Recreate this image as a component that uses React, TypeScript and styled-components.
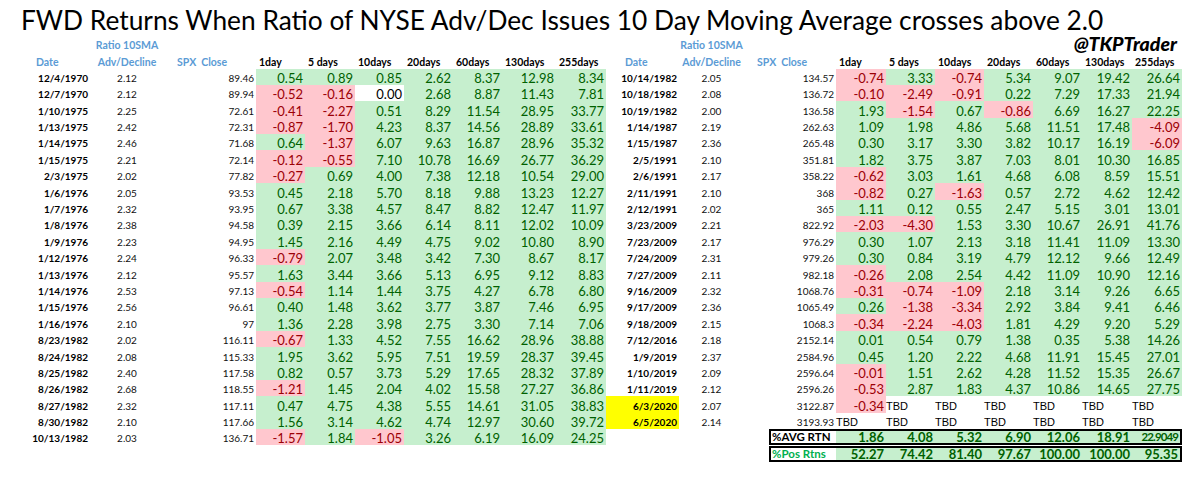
import React from 'react';
import styled, { createGlobalStyle } from 'styled-components';

const GlobalStyle = createGlobalStyle`
  html, body {
    margin: 0;
    padding: 0;
    background: #ffffff;
  }
  body {
    font-family: Lato, 'Open Sans', sans-serif;
    color: #000;
  }
`;

const Page = styled.div`
  width: 1200px;
  height: 481px;
  overflow: hidden;
  background: #fff;
`;

const Title = styled.h1`
  margin: 0;
  height: 36px;
  box-sizing: border-box;
  padding: 5px 0 0 21px;
  font-size: 26.3px;
  font-weight: 400;
  line-height: 30px;
  white-space: nowrap;
`;

const Tables = styled.div`
  display: flex;
  padding-left: 17px;
`;

const Sheet = styled.div<{ $cols: string }>`
  display: grid;
  grid-template-columns: ${p => p.$cols};
  grid-template-rows: 16.25px 16.25px;
  grid-auto-rows: 16.4px;
`;

type Align = 'left' | 'center' | 'right';

const Cell = styled.div<{ $align?: Align; $span?: number }>`
  display: flex;
  align-items: flex-end;
  justify-content: ${p => (p.$align === 'right' ? 'flex-end' : p.$align === 'center' ? 'center' : 'flex-start')};
  grid-column: ${p => (p.$span ? `span ${p.$span}` : 'auto')};
  min-width: 0;
  box-sizing: border-box;
  padding: 0 2px 1px;
  line-height: 12px;
  white-space: nowrap;
`;

const HeadCell = styled(Cell)<{ $indent?: number }>`
  padding-left: ${p => p.$indent ?? 2}px;
  font-size: 10.5px;
  font-weight: 700;
  color: #5b9bd5;
  white-space: pre;
`;

const DayHead = styled(Cell)`
  padding-left: 3px;
  font-size: 10.5px;
  font-weight: 700;
`;

const Handle = styled(Cell)`
  grid-column: 9 / -1;
  justify-content: flex-end;
  padding-right: 5px;
  font-size: 19.5px;
  font-weight: 900;
  font-style: italic;
  line-height: 15px;
`;

const DateCell = styled(Cell)<{ $highlight?: boolean }>`
  justify-content: flex-end;
  font-size: 10px;
  font-weight: 700;
  background: ${p => (p.$highlight ? '#ffff00' : 'transparent')};
`;

const SmallCell = styled(Cell)`
  font-size: 10px;
  color: #111;
`;

type Tone = 'pos' | 'neg' | 'zero';

const toneBg: Record<Tone, string> = { pos: '#c6efce', neg: '#ffc7ce', zero: '#ffffff' };
const toneInk: Record<Tone, string> = { pos: '#006100', neg: '#9c0006', zero: '#000000' };

const ReturnCell = styled(Cell)<{ $tone: Tone }>`
  justify-content: flex-end;
  font-size: 13px;
  background: ${p => toneBg[p.$tone]};
  color: ${p => toneInk[p.$tone]};
`;

const TbdCell = styled(Cell)`
  padding-left: 0;
  font-family: 'Liberation Sans', Arial, sans-serif;
  font-size: 11px;
`;

const SummaryRow = styled.div<{ $gap?: boolean }>`
  grid-column: 4 / -1;
  display: grid;
  grid-template-columns: subgrid;
  box-sizing: border-box;
  margin-top: ${p => (p.$gap ? 1 : 0)}px;
  border: 2px solid #000;
`;

const SummaryLabel = styled(Cell)<{ $ink: string }>`
  padding-left: 1px;
  padding-bottom: 0;
  font-size: 11.5px;
  font-weight: 700;
  color: ${p => p.$ink};
`;

const SummaryValue = styled(Cell)<{ $fit?: boolean }>`
  justify-content: flex-end;
  padding-bottom: 0;
  font-size: ${p => (p.$fit ? 11.5 : 13)}px;
  letter-spacing: ${p => (p.$fit ? -0.9 : 0)}px;
  font-weight: 700;
  background: #c6efce;
  color: #006100;
`;

type Row = [string, string, string, ...string[]];

const leftRows: Row[] = [
  ['12/4/1970', '2.12', '89.46', '0.54', '0.89', '0.85', '2.62', '8.37', '12.98', '8.34'],
  ['12/7/1970', '2.12', '89.94', '-0.52', '-0.16', '0.00', '2.68', '8.87', '11.43', '7.81'],
  ['1/10/1975', '2.25', '72.61', '-0.41', '-2.27', '0.51', '8.29', '11.54', '28.95', '33.77'],
  ['1/13/1975', '2.42', '72.31', '-0.87', '-1.70', '4.23', '8.37', '14.56', '28.89', '33.61'],
  ['1/14/1975', '2.46', '71.68', '0.64', '-1.37', '6.07', '9.63', '16.87', '28.96', '35.32'],
  ['1/15/1975', '2.21', '72.14', '-0.12', '-0.55', '7.10', '10.78', '16.69', '26.77', '36.29'],
  ['2/3/1975', '2.02', '77.82', '-0.27', '0.69', '4.00', '7.38', '12.18', '10.54', '29.00'],
  ['1/6/1976', '2.05', '93.53', '0.45', '2.18', '5.70', '8.18', '9.88', '13.23', '12.27'],
  ['1/7/1976', '2.32', '93.95', '0.67', '3.38', '4.57', '8.47', '8.82', '12.47', '11.97'],
  ['1/8/1976', '2.38', '94.58', '0.39', '2.15', '3.66', '6.14', '8.11', '12.02', '10.09'],
  ['1/9/1976', '2.23', '94.95', '1.45', '2.16', '4.49', '4.75', '9.02', '10.80', '8.90'],
  ['1/12/1976', '2.24', '96.33', '-0.79', '2.07', '3.48', '3.42', '7.30', '8.67', '8.17'],
  ['1/13/1976', '2.12', '95.57', '1.63', '3.44', '3.66', '5.13', '6.95', '9.12', '8.83'],
  ['1/14/1976', '2.53', '97.13', '-0.54', '1.14', '1.44', '3.75', '4.27', '6.78', '6.80'],
  ['1/15/1976', '2.56', '96.61', '0.40', '1.48', '3.62', '3.77', '3.87', '7.46', '6.95'],
  ['1/16/1976', '2.10', '97', '1.36', '2.28', '3.98', '2.75', '3.30', '7.14', '7.06'],
  ['8/23/1982', '2.02', '116.11', '-0.67', '1.33', '4.52', '7.55', '16.62', '28.96', '38.88'],
  ['8/24/1982', '2.08', '115.33', '1.95', '3.62', '5.95', '7.51', '19.59', '28.37', '39.45'],
  ['8/25/1982', '2.40', '117.58', '0.82', '0.57', '3.73', '5.29', '17.65', '28.32', '37.89'],
  ['8/26/1982', '2.68', '118.55', '-1.21', '1.45', '2.04', '4.02', '15.58', '27.27', '36.86'],
  ['8/27/1982', '2.32', '117.11', '0.47', '4.75', '4.38', '5.55', '14.61', '31.05', '38.83'],
  ['8/30/1982', '2.10', '117.66', '1.56', '3.14', '4.62', '4.74', '12.97', '30.60', '39.72'],
  ['10/13/1982', '2.03', '136.71', '-1.57', '1.84', '-1.05', '3.26', '6.19', '16.09', '24.25'],
];

const T = 'TBD';

const rightRows: Row[] = [
  ['10/14/1982', '2.05', '134.57', '-0.74', '3.33', '-0.74', '5.34', '9.07', '19.42', '26.64'],
  ['10/18/1982', '2.08', '136.72', '-0.10', '-2.49', '-0.91', '0.22', '7.29', '17.33', '21.94'],
  ['10/19/1982', '2.00', '136.58', '1.93', '-1.54', '0.67', '-0.86', '6.69', '16.27', '22.25'],
  ['1/14/1987', '2.19', '262.63', '1.09', '1.98', '4.86', '5.68', '11.51', '17.48', '-4.09'],
  ['1/15/1987', '2.36', '265.48', '0.30', '3.17', '3.30', '3.82', '10.17', '16.19', '-6.09'],
  ['2/5/1991', '2.10', '351.81', '1.82', '3.75', '3.87', '7.03', '8.01', '10.30', '16.85'],
  ['2/6/1991', '2.17', '358.22', '-0.62', '3.03', '1.61', '4.68', '6.08', '8.59', '15.51'],
  ['2/11/1991', '2.10', '368', '-0.82', '0.27', '-1.63', '0.57', '2.72', '4.62', '12.42'],
  ['2/12/1991', '2.02', '365', '1.11', '0.12', '0.55', '2.47', '5.15', '3.01', '13.01'],
  ['3/23/2009', '2.21', '822.92', '-2.03', '-4.30', '1.53', '3.30', '10.67', '26.91', '41.76'],
  ['7/23/2009', '2.17', '976.29', '0.30', '1.07', '2.13', '3.18', '11.41', '11.09', '13.30'],
  ['7/24/2009', '2.31', '979.26', '0.30', '0.84', '3.19', '4.79', '12.12', '9.66', '12.49'],
  ['7/27/2009', '2.11', '982.18', '-0.26', '2.08', '2.54', '4.42', '11.09', '10.90', '12.16'],
  ['9/16/2009', '2.32', '1068.76', '-0.31', '-0.74', '-1.09', '2.18', '3.14', '9.26', '6.65'],
  ['9/17/2009', '2.36', '1065.49', '0.26', '-1.38', '-3.34', '2.92', '3.84', '9.41', '6.46'],
  ['9/18/2009', '2.15', '1068.3', '-0.34', '-2.24', '-4.03', '1.81', '4.29', '9.20', '5.29'],
  ['7/12/2016', '2.18', '2152.14', '0.01', '0.54', '0.79', '1.38', '0.35', '5.38', '14.26'],
  ['1/9/2019', '2.37', '2584.96', '0.45', '1.20', '2.22', '4.68', '11.91', '15.45', '27.01'],
  ['1/10/2019', '2.09', '2596.64', '-0.01', '1.51', '2.62', '4.28', '11.52', '15.35', '26.67'],
  ['1/11/2019', '2.12', '2596.26', '-0.53', '2.87', '1.83', '4.37', '10.86', '14.65', '27.75'],
  ['6/3/2020', '2.07', '3122.87', '-0.34', T, T, T, T, T, T],
  ['6/5/2020', '2.14', '3193.93', T, T, T, T, T, T, T],
];

const highlighted = new Set(['6/3/2020', '6/5/2020']);

const dayHeads = ['1day', '5 days', '10days', '20days', '60days', '130days', '255days'];

const summary = [
  { label: '%AVG RTN', ink: '#000000', values: ['1.86', '4.08', '5.32', '6.90', '12.06', '18.91', '22.9049'] },
  { label: '%Pos Rtns', ink: '#00b050', values: ['52.27', '74.42', '81.40', '97.67', '100.00', '100.00', '95.35'] },
];

const toneOf = (v: string): Tone => (v.startsWith('-') ? 'neg' : Number(v) === 0 ? 'zero' : 'pos');

const DataRow = ({ row }: { row: Row }) => {
  const [date, ratio, spx, ...rets] = row;
  return (
    <>
      <DateCell $highlight={highlighted.has(date)}>{date}</DateCell>
      <SmallCell $align="center">{ratio}</SmallCell>
      <SmallCell $align="right" $span={2}>{spx}</SmallCell>
      {rets.map((v, i) =>
        v === T ? (
          <TbdCell key={i}>{v}</TbdCell>
        ) : (
          <ReturnCell key={i} $tone={toneOf(v)}>{v}</ReturnCell>
        )
      )}
    </>
  );
};

const Headers = ({ handle }: { handle?: boolean }) => (
  <>
    <Cell />
    <HeadCell $align="center">Ratio 10SMA</HeadCell>
    {handle ? (
      <>
        <Cell $span={6} />
        <Handle>@TKPTrader</Handle>
      </>
    ) : (
      <Cell $span={9} />
    )}
    <HeadCell $indent={19}>Date</HeadCell>
    <HeadCell $align="center">Adv/Decline</HeadCell>
    <HeadCell $indent={13} $span={2}>{'SPX  Close'}</HeadCell>
    {dayHeads.map(h => (
      <DayHead key={h}>{h}</DayHead>
    ))}
  </>
);

export default function App() {
  return (
    <Page>
      <GlobalStyle />
      <Title>FWD Returns When Ratio of NYSE Adv/Dec Issues 10 Day Moving Average crosses above 2.0</Title>
      <Tables>
        <Sheet $cols="73px 74px 25px 67px 49px 50px 49px 49px 49px 54px 50px">
          <Headers />
          {leftRows.map(r => (
            <DataRow key={r[0]} row={r} />
          ))}
        </Sheet>
        <Sheet $cols="73px 65px 25px 67px 50px 49px 49px 49px 49px 50px 50px">
          <Headers handle />
          {rightRows.map(r => (
            <DataRow key={r[0]} row={r} />
          ))}
          {summary.map((s, i) => (
            <React.Fragment key={s.label}>
              <Cell $span={3} />
              <SummaryRow $gap={i > 0}>
                <SummaryLabel $ink={s.ink}>{s.label}</SummaryLabel>
                {s.values.map((v, j) => (
                  <SummaryValue key={j} $fit={v.length > 6}>{v}</SummaryValue>
                ))}
              </SummaryRow>
            </React.Fragment>
          ))}
        </Sheet>
      </Tables>
    </Page>
  );
}
